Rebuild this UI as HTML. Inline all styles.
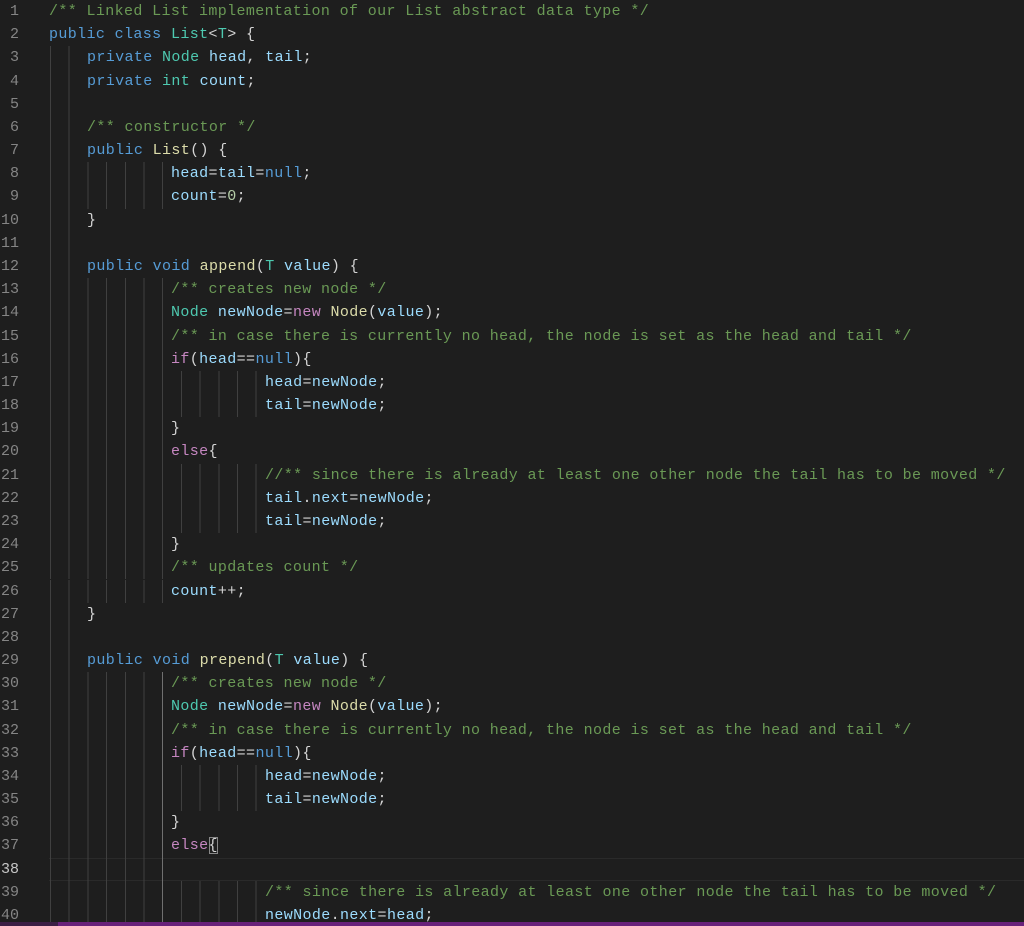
<!DOCTYPE html>
<html><head><meta charset="utf-8"><style>
html,body{margin:0;padding:0;background:#1e1e1e;width:1024px;height:926px;overflow:hidden;position:relative}
.l{position:absolute;left:0;width:1024px;height:23.18px;line-height:23.18px;font-family:"Liberation Mono",monospace;font-size:15px;letter-spacing:0.375px;white-space:pre;color:#d4d4d4}
.n{position:absolute;right:1005px;color:#858585;letter-spacing:0}
.g{position:absolute;left:49.5px;top:0;height:23.18px;background:repeating-linear-gradient(to right,#404040 0 1px,transparent 1px 18.7px)}
.c{position:absolute;top:0}
.L0{left:49px}.L1{left:87px}.L2{left:171px}.L3{left:265px}
.g2{width:20px}.g7{width:114px}.g12{width:208px}
.cm{color:#6a9955}.k{color:#569cd6}.t{color:#4ec9b0}.v{color:#9cdcfe}.f{color:#dcdcaa}.p{color:#c586c0}.num{color:#b5cea8}
.cur{border-top:1px solid #2a2a2a;border-bottom:1px solid #2a2a2a;box-sizing:border-box}
.bm{outline:1px solid #888;outline-offset:-1px}
</style></head><body>
<div class="l" style="top:0px"><span class="n">1</span><span class="c L0 cm">/** Linked List implementation of our List abstract data type */</span></div>
<div class="l" style="top:23.18px"><span class="n">2</span><span class="c L0"><span class="k">public</span> <span class="k">class</span> <span class="t">List</span>&lt;<span class="t">T</span>&gt; {</span></div>
<div class="l" style="top:46.36px"><span class="n">3</span><span class="g g2"></span><span class="c L1"><span class="k">private</span> <span class="t">Node</span> <span class="v">head</span>, <span class="v">tail</span>;</span></div>
<div class="l" style="top:69.54px"><span class="n">4</span><span class="g g2"></span><span class="c L1"><span class="k">private</span> <span class="t">int</span> <span class="v">count</span>;</span></div>
<div class="l" style="top:92.72px"><span class="n">5</span><span class="g g2"></span></div>
<div class="l" style="top:115.9px"><span class="n">6</span><span class="g g2"></span><span class="c L1 cm">/** constructor */</span></div>
<div class="l" style="top:139.08px"><span class="n">7</span><span class="g g2"></span><span class="c L1"><span class="k">public</span> <span class="f">List</span>() {</span></div>
<div class="l" style="top:162.26px"><span class="n">8</span><span class="g g7"></span><span class="c L2"><span class="v">head</span>=<span class="v">tail</span>=<span class="k">null</span>;</span></div>
<div class="l" style="top:185.44px"><span class="n">9</span><span class="g g7"></span><span class="c L2"><span class="v">count</span>=<span class="num">0</span>;</span></div>
<div class="l" style="top:208.62px"><span class="n">10</span><span class="g g2"></span><span class="c L1">}</span></div>
<div class="l" style="top:231.8px"><span class="n">11</span><span class="g g2"></span></div>
<div class="l" style="top:254.98px"><span class="n">12</span><span class="g g2"></span><span class="c L1"><span class="k">public</span> <span class="k">void</span> <span class="f">append</span>(<span class="t">T</span> <span class="v">value</span>) {</span></div>
<div class="l" style="top:278.16px"><span class="n">13</span><span class="g g7"></span><span class="c L2 cm">/** creates new node */</span></div>
<div class="l" style="top:301.34px"><span class="n">14</span><span class="g g7"></span><span class="c L2"><span class="t">Node</span> <span class="v">newNode</span>=<span class="p">new</span> <span class="f">Node</span>(<span class="v">value</span>);</span></div>
<div class="l" style="top:324.52px"><span class="n">15</span><span class="g g7"></span><span class="c L2 cm">/** in case there is currently no head, the node is set as the head and tail */</span></div>
<div class="l" style="top:347.7px"><span class="n">16</span><span class="g g7"></span><span class="c L2"><span class="p">if</span>(<span class="v">head</span>==<span class="k">null</span>){</span></div>
<div class="l" style="top:370.88px"><span class="n">17</span><span class="g g12"></span><span class="c L3"><span class="v">head</span>=<span class="v">newNode</span>;</span></div>
<div class="l" style="top:394.06px"><span class="n">18</span><span class="g g12"></span><span class="c L3"><span class="v">tail</span>=<span class="v">newNode</span>;</span></div>
<div class="l" style="top:417.24px"><span class="n">19</span><span class="g g7"></span><span class="c L2">}</span></div>
<div class="l" style="top:440.42px"><span class="n">20</span><span class="g g7"></span><span class="c L2"><span class="p">else</span>{</span></div>
<div class="l" style="top:463.6px"><span class="n">21</span><span class="g g12"></span><span class="c L3 cm">//** since there is already at least one other node the tail has to be moved */</span></div>
<div class="l" style="top:486.78px"><span class="n">22</span><span class="g g12"></span><span class="c L3"><span class="v">tail</span>.<span class="v">next</span>=<span class="v">newNode</span>;</span></div>
<div class="l" style="top:509.96px"><span class="n">23</span><span class="g g12"></span><span class="c L3"><span class="v">tail</span>=<span class="v">newNode</span>;</span></div>
<div class="l" style="top:533.14px"><span class="n">24</span><span class="g g7"></span><span class="c L2">}</span></div>
<div class="l" style="top:556.32px"><span class="n">25</span><span class="g g7"></span><span class="c L2 cm">/** updates count */</span></div>
<div class="l" style="top:579.5px"><span class="n">26</span><span class="g g7"></span><span class="c L2"><span class="v">count</span>++;</span></div>
<div class="l" style="top:602.68px"><span class="n">27</span><span class="g g2"></span><span class="c L1">}</span></div>
<div class="l" style="top:625.86px"><span class="n">28</span><span class="g g2"></span></div>
<div class="l" style="top:649.04px"><span class="n">29</span><span class="g g2"></span><span class="c L1"><span class="k">public</span> <span class="k">void</span> <span class="f">prepend</span>(<span class="t">T</span> <span class="v">value</span>) {</span></div>
<div class="l" style="top:672.22px"><span class="n">30</span><span class="g g7"></span><span class="c L2 cm">/** creates new node */</span></div>
<div class="l" style="top:695.4px"><span class="n">31</span><span class="g g7"></span><span class="c L2"><span class="t">Node</span> <span class="v">newNode</span>=<span class="p">new</span> <span class="f">Node</span>(<span class="v">value</span>);</span></div>
<div class="l" style="top:718.58px"><span class="n">32</span><span class="g g7"></span><span class="c L2 cm">/** in case there is currently no head, the node is set as the head and tail */</span></div>
<div class="l" style="top:741.76px"><span class="n">33</span><span class="g g7"></span><span class="c L2"><span class="p">if</span>(<span class="v">head</span>==<span class="k">null</span>){</span></div>
<div class="l" style="top:764.94px"><span class="n">34</span><span class="g g12"></span><span class="c L3"><span class="v">head</span>=<span class="v">newNode</span>;</span></div>
<div class="l" style="top:788.12px"><span class="n">35</span><span class="g g12"></span><span class="c L3"><span class="v">tail</span>=<span class="v">newNode</span>;</span></div>
<div class="l" style="top:811.3px"><span class="n">36</span><span class="g g7"></span><span class="c L2">}</span></div>
<div class="l" style="top:834.48px"><span class="n">37</span><span class="g g7"></span><span class="c L2"><span class="p">else</span><span class="bm">{</span></span></div>
<div class="l cur" style="top:857.66px;left:49px;width:975px"></div>
<div class="l" style="top:857.66px"><span class="n" style="color:#c6c6c6">38</span><span class="g g7"></span></div>
<div class="l" style="top:880.84px"><span class="n">39</span><span class="g g12"></span><span class="c L3 cm">/** since there is already at least one other node the tail has to be moved */</span></div>
<div class="l" style="top:904.02px"><span class="n">40</span><span class="g g12"></span><span class="c L3"><span class="v">newNode</span>.<span class="v">next</span>=<span class="v">head</span>;</span></div>
<div style="position:absolute;left:162px;top:672px;width:1px;height:250px;background:#707070"></div>
<div style="position:absolute;left:0;top:922px;width:58px;height:4px;background:#3b1f45"></div>
<div style="position:absolute;left:58px;top:922px;width:966px;height:4px;background:#68217a"></div>
</body></html>
